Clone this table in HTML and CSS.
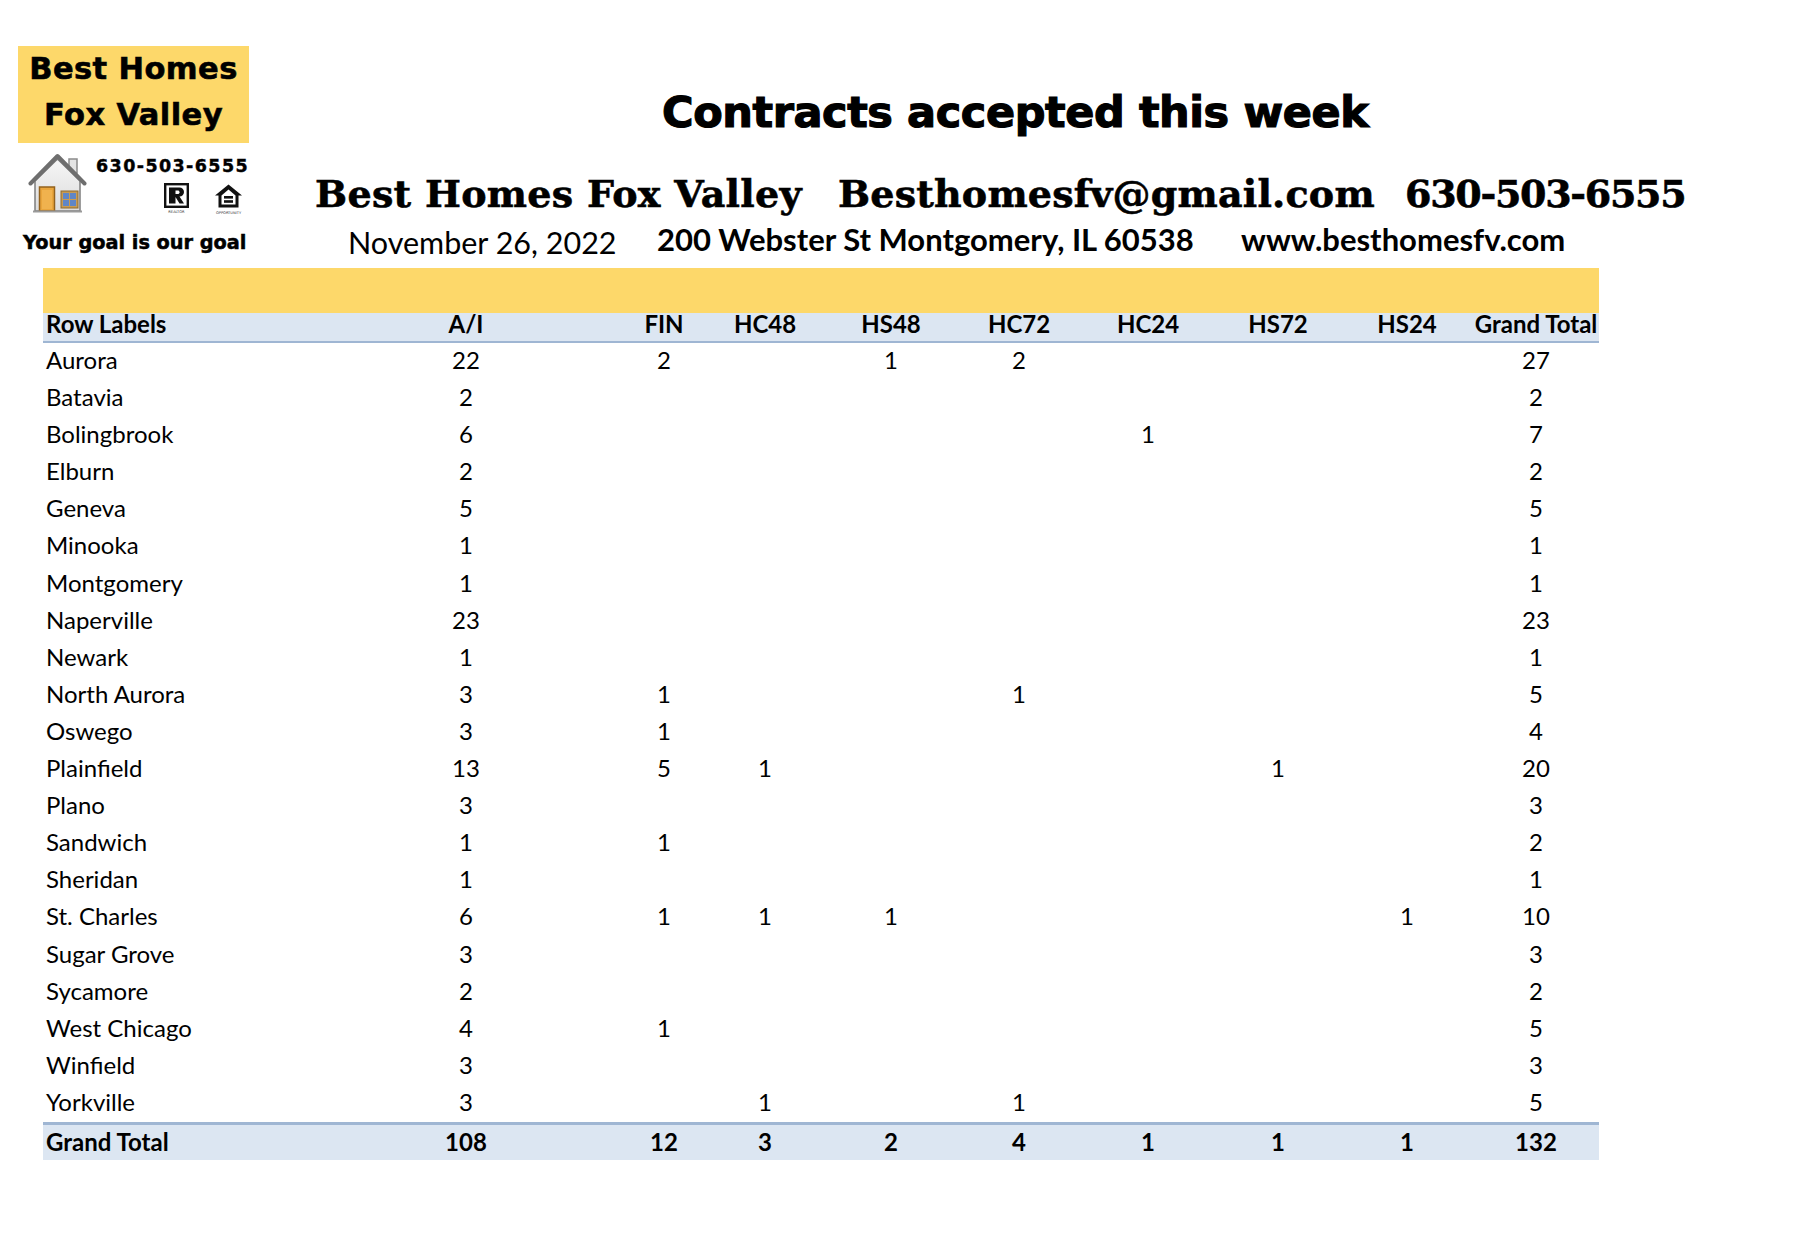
FILE: index.html
```html
<!DOCTYPE html>
<html lang="en">
<head>
<meta charset="utf-8">
<title>Contracts accepted this week</title>
<link rel="stylesheet" href="styles.css">
</head>
<body>
<div class="page">
  <header class="top">
    <div class="logo">
      <div class="logo-box">
        <div>Best Homes</div>
        <div>Fox Valley</div>
      </div>
      <div class="logo-mid">
        <svg class="house" viewBox="0 0 60 62" width="60" height="62">
          <defs>
            <linearGradient id="wall" x1="0" y1="0" x2="0" y2="1">
              <stop offset="0" stop-color="#f6f6f6"/>
              <stop offset="1" stop-color="#dcdcdc"/>
            </linearGradient>
          </defs>
          <rect x="41" y="8" width="8" height="14" fill="#e4e4e4" stroke="#8a8a8a" stroke-width="1.5"/>
          <path d="M7 60 V30 L29.5 8 L52 30 V60 Z" fill="url(#wall)" stroke="#7d7d7d" stroke-width="1.5"/>
          <path d="M2.5 32.5 L29.5 5 L56.5 32.5" fill="none" stroke="#6e6e6e" stroke-width="4" stroke-linecap="round" stroke-linejoin="round"/>
          <rect x="11.5" y="36" width="15" height="24" fill="#e9a53c" stroke="#93621d" stroke-width="1.5"/>
          <rect x="14" y="39" width="10" height="19" fill="#f0b24e"/>
          <rect x="33" y="40" width="17" height="17" fill="#c89b52" stroke="#8d6a2e" stroke-width="1"/>
          <rect x="35" y="42" width="6" height="6" fill="#5f86c6"/>
          <rect x="42" y="42" width="6" height="6" fill="#5f86c6"/>
          <rect x="35" y="49" width="6" height="6" fill="#5f86c6"/>
          <rect x="42" y="49" width="6" height="6" fill="#5f86c6"/>
          <rect x="5" y="59.5" width="49" height="2" fill="#9a9a9a"/>
        </svg>
        <div class="logo-right">
          <div class="logo-phone">630-503-6555</div>
          <div class="badges">
            <svg class="realtor" viewBox="0 0 25 31" width="25" height="31">
              <rect x="1.2" y="1.2" width="22.6" height="22.6" fill="#fff" stroke="#111" stroke-width="2.4"/>
              <path d="M5 4.5 H15.5 A4.5 4.5 0 0 1 15.5 13.5 L20 20.5 H15.5 L11.5 14 V20.5 H5 Z" fill="#111"/>
              <path d="M11.5 7.5 H14.5 A2 2 0 0 1 14.5 11 H11.5 Z" fill="#fff"/>
              <text x="12.5" y="29.5" text-anchor="middle" class="tiny">REALTOR</text>
            </svg>
            <svg class="eho" viewBox="0 0 29 32" width="29" height="32">
              <path d="M14.5 1.5 L1 12.5 H4.5 V24.5 H24.5 V12.5 H28 Z" fill="#111"/>
              <path d="M14.5 6.5 L7.5 12.5 V21.5 H21.5 V12.5 Z" fill="#fff"/>
              <rect x="10" y="13" width="9" height="2.6" fill="#111"/>
              <rect x="10" y="17.2" width="9" height="2.6" fill="#111"/>
              <text x="14.5" y="30.5" text-anchor="middle" class="tiny">OPPORTUNITY</text>
            </svg>
          </div>
        </div>
      </div>
      <div class="logo-tag">Your goal is our goal</div>
    </div>
    <div class="head-main">
      <h1 class="title">Contracts accepted this week</h1>
      <div class="contact">
        <span class="c1">Best Homes Fox Valley</span>
        <span class="c2">Besthomesfv@gmail.com</span>
        <span class="c3">630-503-6555</span>
      </div>
      <div class="info">
        <span class="i1">November 26, 2022</span>
        <span class="i2">200 Webster St Montgomery, IL 60538</span>
        <span class="i3">www.besthomesfv.com</span>
      </div>
    </div>
  </header>

  <section class="pivot">
    <div class="pivot-bar"></div>
    <div class="row head">
      <div class="lab">Row Labels</div>
      <div class="num">A/I</div><div class="num">FIN</div><div class="num">HC48</div><div class="num">HS48</div><div class="num">HC72</div><div class="num">HC24</div><div class="num">HS72</div><div class="num">HS24</div><div class="num">Grand Total</div>
    </div>
    <div class="row"><div class="lab">Aurora</div><div class="num">22</div><div class="num">2</div><div class="num"></div><div class="num">1</div><div class="num">2</div><div class="num"></div><div class="num"></div><div class="num"></div><div class="num">27</div></div>
    <div class="row"><div class="lab">Batavia</div><div class="num">2</div><div class="num"></div><div class="num"></div><div class="num"></div><div class="num"></div><div class="num"></div><div class="num"></div><div class="num"></div><div class="num">2</div></div>
    <div class="row"><div class="lab">Bolingbrook</div><div class="num">6</div><div class="num"></div><div class="num"></div><div class="num"></div><div class="num"></div><div class="num">1</div><div class="num"></div><div class="num"></div><div class="num">7</div></div>
    <div class="row"><div class="lab">Elburn</div><div class="num">2</div><div class="num"></div><div class="num"></div><div class="num"></div><div class="num"></div><div class="num"></div><div class="num"></div><div class="num"></div><div class="num">2</div></div>
    <div class="row"><div class="lab">Geneva</div><div class="num">5</div><div class="num"></div><div class="num"></div><div class="num"></div><div class="num"></div><div class="num"></div><div class="num"></div><div class="num"></div><div class="num">5</div></div>
    <div class="row"><div class="lab">Minooka</div><div class="num">1</div><div class="num"></div><div class="num"></div><div class="num"></div><div class="num"></div><div class="num"></div><div class="num"></div><div class="num"></div><div class="num">1</div></div>
    <div class="row"><div class="lab">Montgomery</div><div class="num">1</div><div class="num"></div><div class="num"></div><div class="num"></div><div class="num"></div><div class="num"></div><div class="num"></div><div class="num"></div><div class="num">1</div></div>
    <div class="row"><div class="lab">Naperville</div><div class="num">23</div><div class="num"></div><div class="num"></div><div class="num"></div><div class="num"></div><div class="num"></div><div class="num"></div><div class="num"></div><div class="num">23</div></div>
    <div class="row"><div class="lab">Newark</div><div class="num">1</div><div class="num"></div><div class="num"></div><div class="num"></div><div class="num"></div><div class="num"></div><div class="num"></div><div class="num"></div><div class="num">1</div></div>
    <div class="row"><div class="lab">North Aurora</div><div class="num">3</div><div class="num">1</div><div class="num"></div><div class="num"></div><div class="num">1</div><div class="num"></div><div class="num"></div><div class="num"></div><div class="num">5</div></div>
    <div class="row"><div class="lab">Oswego</div><div class="num">3</div><div class="num">1</div><div class="num"></div><div class="num"></div><div class="num"></div><div class="num"></div><div class="num"></div><div class="num"></div><div class="num">4</div></div>
    <div class="row"><div class="lab">Plainfield</div><div class="num">13</div><div class="num">5</div><div class="num">1</div><div class="num"></div><div class="num"></div><div class="num"></div><div class="num">1</div><div class="num"></div><div class="num">20</div></div>
    <div class="row"><div class="lab">Plano</div><div class="num">3</div><div class="num"></div><div class="num"></div><div class="num"></div><div class="num"></div><div class="num"></div><div class="num"></div><div class="num"></div><div class="num">3</div></div>
    <div class="row"><div class="lab">Sandwich</div><div class="num">1</div><div class="num">1</div><div class="num"></div><div class="num"></div><div class="num"></div><div class="num"></div><div class="num"></div><div class="num"></div><div class="num">2</div></div>
    <div class="row"><div class="lab">Sheridan</div><div class="num">1</div><div class="num"></div><div class="num"></div><div class="num"></div><div class="num"></div><div class="num"></div><div class="num"></div><div class="num"></div><div class="num">1</div></div>
    <div class="row"><div class="lab">St. Charles</div><div class="num">6</div><div class="num">1</div><div class="num">1</div><div class="num">1</div><div class="num"></div><div class="num"></div><div class="num"></div><div class="num">1</div><div class="num">10</div></div>
    <div class="row"><div class="lab">Sugar Grove</div><div class="num">3</div><div class="num"></div><div class="num"></div><div class="num"></div><div class="num"></div><div class="num"></div><div class="num"></div><div class="num"></div><div class="num">3</div></div>
    <div class="row"><div class="lab">Sycamore</div><div class="num">2</div><div class="num"></div><div class="num"></div><div class="num"></div><div class="num"></div><div class="num"></div><div class="num"></div><div class="num"></div><div class="num">2</div></div>
    <div class="row"><div class="lab">West Chicago</div><div class="num">4</div><div class="num">1</div><div class="num"></div><div class="num"></div><div class="num"></div><div class="num"></div><div class="num"></div><div class="num"></div><div class="num">5</div></div>
    <div class="row"><div class="lab">Winfield</div><div class="num">3</div><div class="num"></div><div class="num"></div><div class="num"></div><div class="num"></div><div class="num"></div><div class="num"></div><div class="num"></div><div class="num">3</div></div>
    <div class="row"><div class="lab">Yorkville</div><div class="num">3</div><div class="num"></div><div class="num">1</div><div class="num"></div><div class="num">1</div><div class="num"></div><div class="num"></div><div class="num"></div><div class="num">5</div></div>
    <div class="row total"><div class="lab">Grand Total</div><div class="num">108</div><div class="num">12</div><div class="num">3</div><div class="num">2</div><div class="num">4</div><div class="num">1</div><div class="num">1</div><div class="num">1</div><div class="num">132</div></div>
  </section>
</div>
</body>
</html>
```

FILE: styles.css
```css
* { box-sizing: border-box; }
html, body { margin: 0; padding: 0; background: #ffffff; }
body { font-family: "Lato", "Liberation Sans", sans-serif; color: #000; }

.page { width: 1800px; height: 1260px; overflow: hidden; background: #fff; }

.top { display: flex; height: 268px; }

/* ---------- logo ---------- */
.logo { width: 249px; padding: 46px 0 0 18px; flex: none; }
.logo-box {
  width: 231px; height: 97px; background: #fdd86a;
  font-family: "DejaVu Sans", sans-serif; font-weight: 700; font-size: 30.5px;
  line-height: 46px; text-align: center; letter-spacing: 0.4px;
  -webkit-text-stroke: 0.6px #000;
}
.logo-mid { display: flex; height: 62px; margin-top: 8px; }
.house { margin-left: 10px; flex: none; }
.logo-right { margin-left: 8px; padding-top: 5px; }
.logo-phone {
  font-family: "DejaVu Sans", sans-serif; font-weight: 700; font-size: 17.5px;
  line-height: 20px; letter-spacing: 1.4px; -webkit-text-stroke: 0.4px #000; white-space: nowrap;
}
.badges { display: flex; gap: 25px; margin-top: 7px; padding-left: 68px; align-items: flex-start; }
.tiny { font-family: "DejaVu Sans", sans-serif; font-size: 3.6px; fill: #333; }
.logo-tag {
  margin-top: 19px; margin-left: 5px;
  font-family: "DejaVu Sans", sans-serif; font-weight: 700; font-size: 19.3px;
  line-height: 22px; white-space: nowrap; -webkit-text-stroke: 0.5px #000;
}

/* ---------- header text ---------- */
.head-main { flex: 1; padding-top: 86px; }
.title {
  margin: 0 0 0 413px; font-family: "DejaVu Sans", sans-serif; font-weight: 700;
  font-size: 43px; line-height: 52px; letter-spacing: -0.4px; white-space: nowrap;
  -webkit-text-stroke: 1.2px #000;
}
.contact {
  display: flex; margin: 36px 0 0 66px; white-space: nowrap;
  font-family: "DejaVu Serif", "Liberation Serif", serif; font-weight: 700;
  font-size: 38px; line-height: 40px; -webkit-text-stroke: 0.6px #000;
}
.c1 { width: 523px; letter-spacing: 0.3px; }
.c2 { width: 567px; letter-spacing: 0.2px; }
.c3 { letter-spacing: -1.3px; }
.info {
  display: flex; margin: 9px 0 0 99px; white-space: nowrap; align-items: baseline;
  font-family: "Lato", sans-serif; font-weight: 700; font-size: 31px; line-height: 32px;
}
.i1 { width: 309px; font-weight: 400; font-size: 30.5px; position: relative; top: 3px; }
.i2 { width: 584px; }

/* ---------- pivot table ---------- */
.pivot { margin-left: 43px; width: 1556px; }
.pivot-bar { height: 45px; background: #fdd86a; }
.row {
  display: grid;
  grid-template-columns: 266px 314px 82px 120px 132px 124px 134px 126px 132px 126px;
  height: 37.1px; font-size: 24px; line-height: 33px;
}
.lab { padding-left: 3px; white-space: nowrap; }
.num { display: flex; justify-content: center; white-space: nowrap; }
.row.head {
  height: 30px; background: #dce6f2; border-bottom: 2px solid #9fb6d3;
  font-weight: 700; line-height: 22px;
}
.row.total {
  height: 38px; background: #dce6f2; border-top: 3px solid #9fb6d3;
  font-weight: 700; line-height: 34px;
}
```
